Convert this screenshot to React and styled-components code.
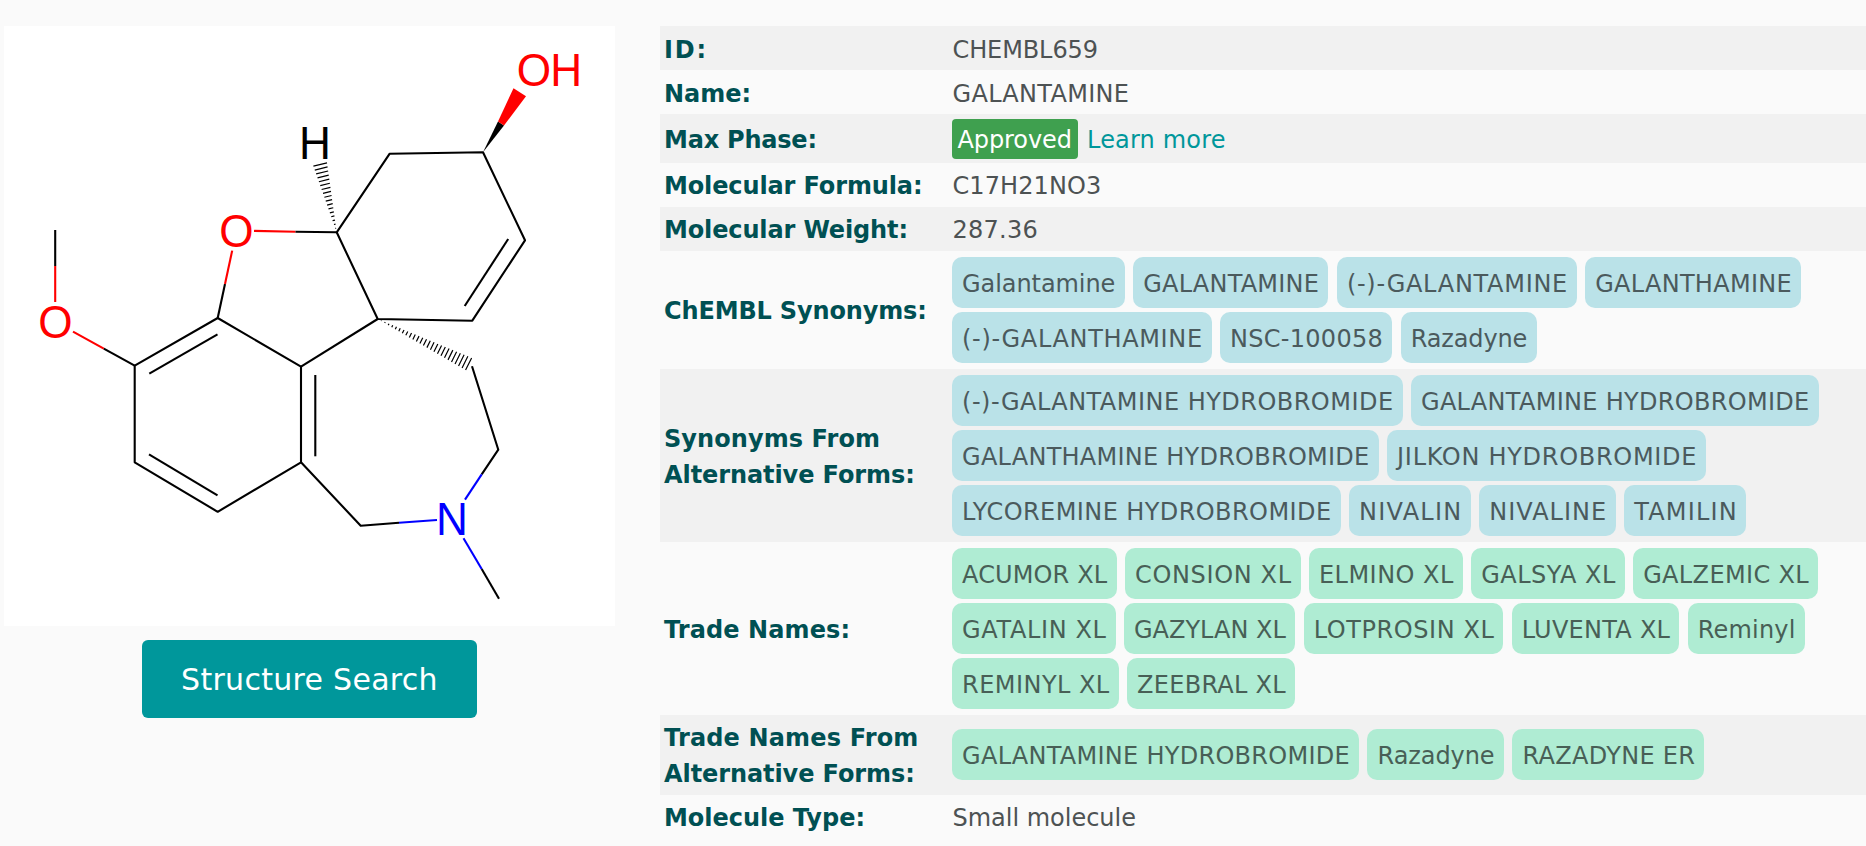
import React, { useLayoutEffect, useRef, useState } from "react";
import styled, { createGlobalStyle } from "styled-components";

const GlobalStyle = createGlobalStyle`
  *, *::before, *::after { box-sizing: border-box; }
  html, body { margin: 0; background: #fafafa; overflow: hidden; }
  body {
    font-family: Verdana, "DejaVu Sans", sans-serif;
    font-size: 24px;
    line-height: 36px;
    color: #4d5253;
  }
`;

const Page = styled.main`
  display: flex;
  align-items: flex-start;
  gap: 45px;
  height: 846px;
  padding: 26px 0 0 4px;
  overflow: hidden;
`;

const StructureColumn = styled.section`
  flex: 0 0 611px;
  display: flex;
  flex-direction: column;
  align-items: center;
  gap: 14px;
`;

const StructureCard = styled.div`
  width: 611px;
  height: 600px;
  background: #fff;
  svg { display: block; }
`;

const SearchButton = styled.button`
  display: flex;
  align-items: center;
  justify-content: center;
  width: 335px;
  height: 78px;
  padding: 2px 0 0;
  border: 0;
  border-radius: 6px;
  background: #00979b;
  color: #fff;
  font: 30px/36px Verdana, "DejaVu Sans", sans-serif;
`;

const Details = styled.dl`
  flex: 1;
  margin: 0;
`;

const Row = styled.div`
  display: flex;
  align-items: center;
  height: ${(p) => p.$height}px;
  background: ${(p) => (p.$striped ? "#f1f1f1" : "#fafafa")};
`;

const Label = styled.dt`
  flex: 0 0 292px;
  padding: ${(p) => p.$drop * 2}px 0 0 4px;
  font-weight: 700;
  color: #005053;
`;

const Value = styled.dd`
  flex: 1;
  margin: 0;
  padding: ${(p) => p.$drop * 2}px 0 0 0.5px;
`;

const ChipList = styled.dd`
  flex: 1;
  display: flex;
  flex-wrap: wrap;
  gap: 4px 8.3px;
  margin: 0;
  padding-bottom: ${(p) => p.$lift || 0}px;
`;

const Chip = styled.span`
  width: ${(p) => p.$width}px;
  height: 51px;
  padding: 9px 9px 6px 10.1px;
  border-radius: 10px;
  background: ${(p) => (p.$tone === "green" ? "#afecd3" : "#bae2e8")};
  color: ${(p) => (p.$tone === "green" ? "#485f56" : "#4b5a5d")};
`;

const PhaseValue = styled.dd`
  flex: 1;
  display: flex;
  align-items: center;
  gap: 9px;
  margin: 0;
`;

const PhaseBadge = styled.span`
  width: 126px;
  height: 40px;
  padding: 3px 5px 1px 5.5px;
  border-radius: 4px;
  background: #3fa04f;
  color: #fff;
`;

const LearnMore = styled.a`
  padding-top: 3px;
  color: #00979b;
`;

const Line = styled.span`
  display: table;
  white-space: nowrap;
`;

/* A single line of text, tracked out or in so that it measures `width`. */
function TrackedText({ width, children }) {
  const ref = useRef(null);
  const [tracking, setTracking] = useState(0);
  useLayoutEffect(() => {
    const natural = ref.current.getBoundingClientRect().width;
    setTracking((width - natural) / (children.length - 1));
  }, [width, children]);
  return (
    <Line ref={ref} style={{ letterSpacing: `${tracking}px` }}>
      {children}
    </Line>
  );
}

const BLACK = "#000";
const RED = "#f00";
const BLUE = "#00f";

const bonds = [
  [BLACK, "M55.2 230V266"],
  [RED, "M55.2 266V302"],
  [RED, "M73 331.7L103.8 348.7"],
  [BLACK, "M103.8 348.7L134.7 365.7"],
  [BLACK, "M134.7 365.7L217.7 318L301 366.7V462.3L217.7 511.8L134.7 462.3Z"],
  [BLACK, "M149.3 373.7L217.5 334.3"],
  [BLACK, "M149 454.3L217.5 495.3"],
  [BLACK, "M315.3 375V456.3"],
  [BLACK, "M217.7 318L225 284"],
  [RED, "M225 284L232.2 250.6"],
  [RED, "M254 230.9L295.5 231.7"],
  [BLACK, "M295.5 231.7L336.7 232.3"],
  [BLACK, "M336.7 232.3L389.7 153.7L483 152.3L525 240.3L472.3 320.7L377.7 319Z"],
  [BLACK, "M508.2 239L464.7 306"],
  [BLACK, "M377.7 319L301 366.7"],
  [BLACK, "M472 366.3L498.3 449.7L481.7 474.3"],
  [BLUE, "M481.7 474.3L465 499.7"],
  [BLUE, "M463.5 538.3L481.7 569"],
  [BLACK, "M481.7 569L499 598.7"],
  [BLUE, "M437 520L399 522.7"],
  [BLACK, "M399 522.7L360.7 525.7L301 462.3"],
];

/* Hashed wedge that widens from its tip (x1, y1) to `spread` at (x2, y2). */
function hashedWedge(x1, y1, x2, y2, spread, count) {
  const length = Math.hypot(x2 - x1, y2 - y1);
  const nx = -(y2 - y1) / length;
  const ny = (x2 - x1) / length;
  let d = "";
  for (let i = 1; i <= count; i += 1) {
    const t = i / count;
    const half = (spread * t) / 2;
    const cx = x1 + (x2 - x1) * t;
    const cy = y1 + (y2 - y1) * t;
    d += `M${cx - nx * half} ${cy - ny * half}L${cx + nx * half} ${cy + ny * half}`;
  }
  return d;
}

const atoms = [
  ["O", RED, 55.4, 337.6],
  ["O", RED, 236.3, 247.2],
  ["O", RED, 533.9, 85.5],
  ["H", RED, 566.1, 85.5],
  ["H", BLACK, 315, 158.6],
  ["N", BLUE, 452, 535.2],
];

const AtomLabel = styled.text`
  font-family: "Liberation Sans", Arial, sans-serif;
  font-size: 46px;
  text-anchor: middle;
`;

function Molecule() {
  return (
    <svg width="611" height="600" viewBox="4 26 611 600">
      <g fill="none" strokeWidth="2.1" strokeLinejoin="round">
        {bonds.map(([color, d]) => (
          <path key={d} d={d} stroke={color} />
        ))}
        <path d={hashedWedge(336.7, 232.3, 320.2, 164.5, 14, 17)} stroke={BLACK} strokeWidth="1.2" />
        <path d={hashedWedge(377.7, 319, 468.6, 364, 13.6, 25)} stroke={BLACK} strokeWidth="1.2" />
      </g>
      <path d="M483 152.3L498 121.5L504 125.5Z" fill={BLACK} />
      <path d="M498 121.5L513.5 88.3L526 96.3L504 125.5Z" fill={RED} />
      {atoms.map(([symbol, color, x, y]) => (
        <AtomLabel key={`${symbol}${x}`} fill={color} transform={`translate(${x} ${y}) scale(.96 1)`}>
          {symbol}
        </AtomLabel>
      ))}
    </svg>
  );
}

const synonyms = [
  ["Galantamine", 172.8], ["GALANTAMINE", 195.4], ["(-)-GALANTAMINE", 240], ["GALANTHAMINE", 216.1],
  ["(-)-GALANTHAMINE", 259.6], ["NSC-100058", 172.4], ["Razadyne", 136.3],
];
const alternativeSynonyms = [
  ["(-)-GALANTAMINE HYDROBROMIDE", 450.6], ["GALANTAMINE HYDROBROMIDE", 407.9],
  ["GALANTHAMINE HYDROBROMIDE", 426.7], ["JILKON HYDROBROMIDE", 319],
  ["LYCOREMINE HYDROBROMIDE", 388.6], ["NIVALIN", 121.9], ["NIVALINE", 136.7], ["TAMILIN", 122.2],
];
const tradeNames = [
  ["ACUMOR XL", 164.6], ["CONSION XL", 175.7], ["ELMINO XL", 153.9], ["GALSYA XL", 153.7], ["GALZEMIC XL", 185.1],
  ["GATALIN XL", 163.5], ["GAZYLAN XL", 171.6], ["LOTPROSIN XL", 199.6], ["LUVENTA XL", 167.9], ["Reminyl", 117.1],
  ["REMINYL XL", 166.7], ["ZEEBRAL XL", 168.2],
];
const alternativeTradeNames = [
  ["GALANTAMINE HYDROBROMIDE", 407.2], ["Razadyne", 136.6], ["RAZADYNE ER", 192.1],
];

const rows = [
  { height: 44, label: [["ID:", 42]], drop: 2, text: ["CHEMBL659", 145.5] },
  { height: 44, label: [["Name:", 87]], drop: 2, text: ["GALANTAMINE", 176.5] },
  { height: 49, label: [["Max Phase:", 153]], phase: true },
  { height: 44, label: [["Molecular Formula:", 258.5]], text: ["C17H21NO3", 148.8] },
  { height: 44, label: [["Molecular Weight:", 244]], text: ["287.36", 85.2] },
  { height: 118, label: [["ChEMBL Synonyms:", 262.8]], chips: synonyms, tone: "blue" },
  { height: 173, label: [["Synonyms From", 216]], label2: ["Alternative Forms:", 250.8], chips: alternativeSynonyms, tone: "blue" },
  { height: 173, label: [["Trade Names:", 186]], chips: tradeNames, tone: "green" },
  { height: 80, label: [["Trade Names From", 254.3]], label2: ["Alternative Forms:", 250.8], chips: alternativeTradeNames, tone: "green", lift: 1 },
  { height: 44, label: [["Molecule Type:", 201]], text: ["Small molecule", 183.5] },
];

function RowValue({ row }) {
  if (row.phase) {
    return (
      <PhaseValue>
        <PhaseBadge><TrackedText width={114.5}>Approved</TrackedText></PhaseBadge>
        <LearnMore><TrackedText width={138.5}>Learn more</TrackedText></LearnMore>
      </PhaseValue>
    );
  }
  if (row.chips) {
    return (
      <ChipList $lift={row.lift}>
        {row.chips.map(([name, width]) => (
          <Chip key={name} $width={width} $tone={row.tone}>
            <TrackedText width={width - 19.6}>{name}</TrackedText>
          </Chip>
        ))}
      </ChipList>
    );
  }
  return (
    <Value $drop={row.drop || 1}>
      <TrackedText width={row.text[1]}>{row.text[0]}</TrackedText>
    </Value>
  );
}

export default function App() {
  return (
    <>
      <GlobalStyle />
      <Page>
        <StructureColumn>
          <StructureCard><Molecule /></StructureCard>
          <SearchButton><TrackedText width={256.5}>Structure Search</TrackedText></SearchButton>
        </StructureColumn>
        <Details>
          {rows.map((row, index) => (
            <Row key={row.label[0][0]} $height={row.height} $striped={index % 2 === 0}>
              <Label $drop={row.drop || 1}>
                {[...row.label, ...(row.label2 ? [row.label2] : [])].map(([text, width]) => (
                  <TrackedText key={text} width={width}>{text}</TrackedText>
                ))}
              </Label>
              <RowValue row={row} />
            </Row>
          ))}
        </Details>
      </Page>
    </>
  );
}
